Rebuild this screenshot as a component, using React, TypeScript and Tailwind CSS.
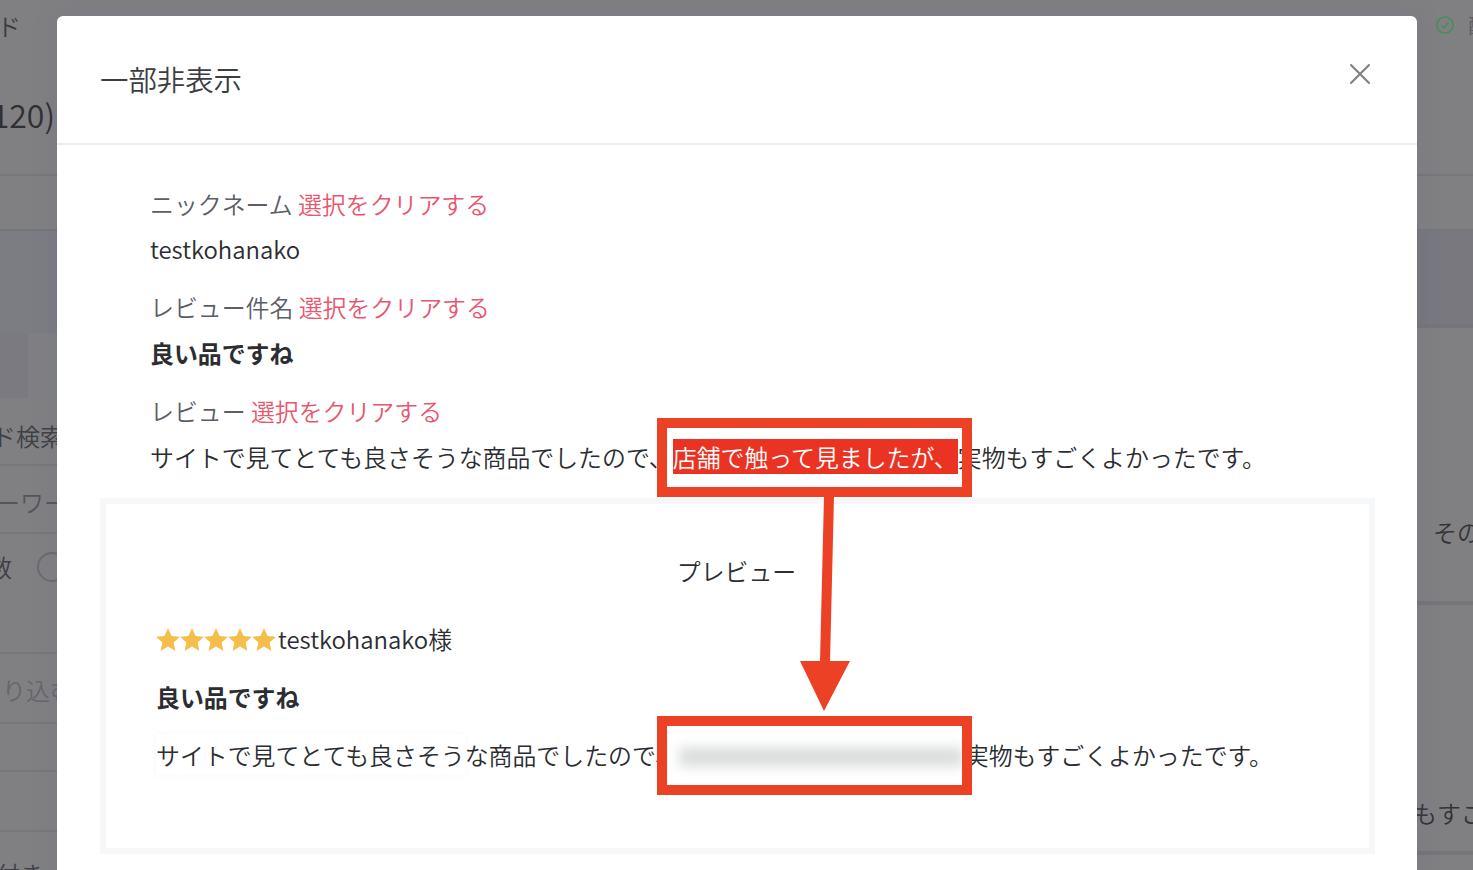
import { X } from "lucide-react";

const font = "font-['Noto_Sans_CJK_JP','Noto_Sans',sans-serif] font-[350]";

const LeftRows = () => (
    <div className="w-[57px] shrink-0 flex flex-col overflow-hidden text-[#3f3f45] text-[24px] leading-none whitespace-nowrap">
        <div className="h-[85px] pt-[14px] -ml-[3px] text-[#3b3b40]">ド</div>
        <div className="h-[91px] border-b-2 border-[#76767b] flex justify-end items-start pt-[13px] pr-[2px] text-[32px] text-[#2f2f34]">120)</div>
        <div className="h-[55px] border-b-2 border-[#76767b]"></div>
        <div className="h-[102px] bg-[#7c7c83]"></div>
        <div className="h-[65px] flex">
            <div className="w-[28px] bg-[#7a7a80]"></div>
            <div className="flex-1 bg-[#808084]"></div>
        </div>
        <div className="h-[68px] pt-[26px] -ml-[8px] border-b-2 border-[#76767b]">ド検索</div>
        <div className="h-[68px] pt-[24px] -ml-[4px] border-b-2 border-[#76767b] text-[#55555a]">ーワーード</div>
        <div className="h-[120px] flex items-start pt-[18px] border-b-2 border-[#76767b]">
            <span className="-ml-[12px] mt-[3px]">数</span>
            <span className="ml-[25px] w-[30px] h-[30px] rounded-full border-2 border-[#6a6a72] shrink-0"></span>
        </div>
        <div className="h-[70px] pt-[24px] -ml-[22px] border-b-2 border-[#76767b] text-[#66666b]">まり込む</div>
        <div className="h-[48px] border-b-2 border-[#76767b]"></div>
        <div className="h-[60px] border-b-2 border-[#76767b]"></div>
        <div className="h-[38px] pt-[30px] -ml-[4px] text-[#3f3f45]">付き:</div>
    </div>
);

const RightRows = () => (
    <div className="w-[56px] shrink-0 flex flex-col overflow-hidden text-[#3f3f45] text-[24px] leading-none whitespace-nowrap">
        <div className="h-[85px] pt-[16px] pl-[19px] flex items-start gap-[14px]">
            <svg viewBox="0 0 24 24" className="w-[18px] h-[18px] shrink-0 text-[#3f8f55]" fill="none" stroke="currentColor" strokeWidth="1.8">
                <circle cx="12" cy="12" r="10.8" />
                <path d="M7 12.5l3.5 3.5L17 8.5" />
            </svg>
            <span className="text-[20px] text-[#5a5a5f]">配送</span>
        </div>
        <div className="h-[91px] border-b-2 border-[#76767b]"></div>
        <div className="h-[55px] border-b-2 border-[#76767b]"></div>
        <div className="h-[97px] bg-[#78787e] border-b-4 border-[#75757a]"></div>
        <div className="h-[277px] pt-[192px] pl-[16px] border-b-4 border-[#75757a] text-[#333338]">その他</div>
        <div className="h-[250px] pt-[196px] -ml-[4px] border-b-4 border-[#75757a] text-[#333338]">もすご</div>
    </div>
);

const Clear = () => <span className="text-[#e8566f]">選択をクリアする</span>;

const RateStar = () => (
    <svg viewBox="0 0 24 23" className="w-[24px] h-[23px] text-[#f5bd4a]" fill="currentColor">
        <polygon points="12,0 15.5,8 24,8.8 17.6,14.5 19.4,23 12,18.6 4.6,23 6.4,14.5 0,8.8 8.5,8" />
    </svg>
);

export default function App() {
    return (
        <div className={`h-[870px] overflow-hidden bg-[#808082] flex ${font}`}>
            <LeftRows />
            <div className="relative flex-1 mt-[16px] bg-white rounded-t-[6px] text-[23.9px] text-[#2b2d31] h-[900px] shadow-[0_0_24px_rgba(90,90,150,0.18)]">
                <div className="h-[129px] border-b-2 border-[#ebecef] pl-[43px] flex justify-between">
                    <h2 className="pt-[41px] text-[28.4px] leading-[44px] text-[#3b3d42] font-[350]">一部非表示</h2>
                    <button className="w-[36px] h-[36px] mt-[40px] mr-[39px] text-[#808080]">
                        <X className="w-[36px] h-[36px]" strokeWidth={1.4} />
                    </button>
                </div>

                <div className="pt-[35px] pl-[43px] pr-[42px]">
                    <div className="pl-[50px] flex flex-col leading-[46px]">
                        <p className="mt-px -mb-px text-[#5b5e66]">ニックネーム <Clear /></p>
                        <p className="mb-[12px]">testkohanako</p>
                        <p className="text-[#5b5e66]">レビュー件名 <Clear /></p>
                        <p className="mb-[12px] font-bold">良い品ですね</p>
                        <p className="text-[#5b5e66]">レビュー <Clear /></p>
                        <p>サイトで見てとても良さそうな商品でしたので、<span className="bg-[#ea3323] text-white">店舗で触って見ましたが、</span>実物もすごくよかったです。</p>
                    </div>

                    <div className="mt-[18px] h-[356px] border-[6px] border-[#f6f7f9] pl-[50px] pr-[52px]">
                        <p className="pt-[45px] text-center leading-[44px]">プレビュー</p>
                        <div className="mt-[24px] flex items-center leading-[44px]">
                            <span className="flex">
                                {[0, 1, 2, 3, 4].map(i => <RateStar key={i} />)}
                            </span>
                            <span className="ml-[2px]">testkohanako様</span>
                        </div>
                        <p className="mt-[14px] font-bold leading-[44px]">良い品ですね</p>
                        <p className="mt-[14px] leading-[44px] whitespace-nowrap">
                            <span className="bg-white py-[3px] shadow-[0_0_8px_rgba(0,0,0,0.04)]">サイトで見てとても良さそう</span>
                            <span>な商品でしたので、</span>
                            <span className="inline-block w-[284px] h-[20px] mr-[2px] bg-[#dcdede] blur-[6px] align-[-2px]"></span>
                            <span>実物もすごくよかったです。</span>
                        </p>
                    </div>
                </div>

                {/* annotation overlay */}
                <div className="absolute left-[600px] top-[402px] w-[315px] h-[79px] border-[10px] border-[#ec4125]"></div>
                <div className="absolute left-[600px] top-[700px] w-[315px] h-[79px] border-[10px] border-[#ec4125]"></div>
                <svg className="absolute left-[730px] top-[480px] w-[80px] h-[216px]" viewBox="0 0 80 216" fill="none">
                    <path d="M42 0 L38 166" stroke="#ec4125" strokeWidth="10" />
                    <path d="M13 165 L63 165 L37 215 Z" fill="#ec4125" />
                </svg>
            </div>
            <RightRows />
        </div>
    );
}
